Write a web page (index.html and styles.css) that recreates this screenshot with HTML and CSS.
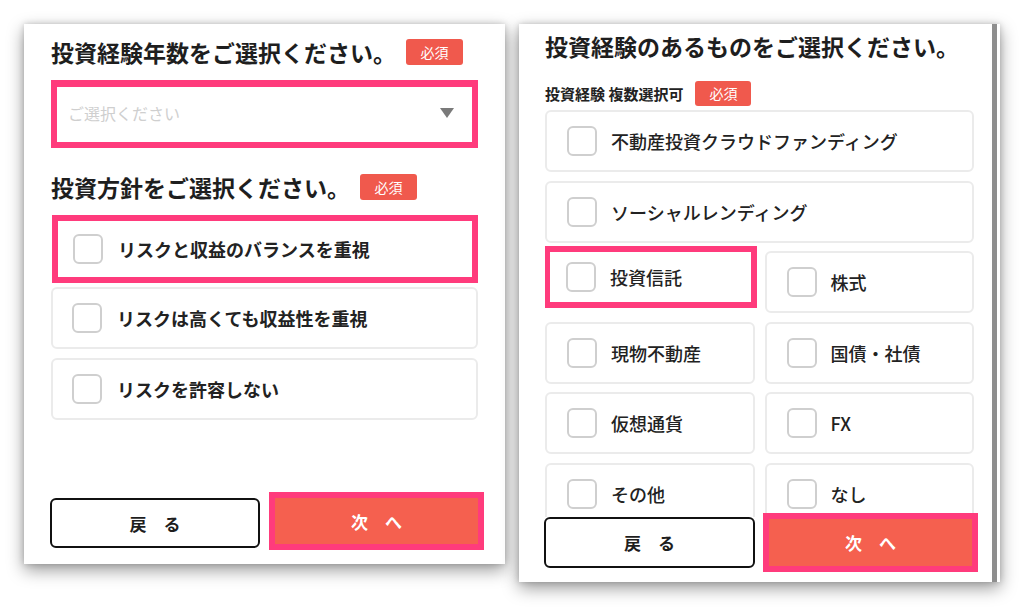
FILE: index.html
```html
<!DOCTYPE html>
<html lang="ja">
<head>
<meta charset="utf-8">
<title>投資経験</title>
<link rel="stylesheet" href="styles.css">
</head>
<body>
<div class="page">
  <section class="panel panel-left">
    <div class="q-row q-first">
      <h2 class="q-title">投資経験年数をご選択ください。</h2>
      <span class="badge badge-a">必須</span>
    </div>
    <div class="select hl">
      <span class="placeholder">ご選択ください</span>
      <span class="caret"></span>
    </div>
    <div class="q-row q-second">
      <h2 class="q-title">投資方針をご選択ください。</h2>
      <span class="badge badge-b">必須</span>
    </div>
    <div class="opt-list">
      <label class="opt opt-hl"><span class="cb"></span><span class="txt">リスクと収益のバランスを重視</span></label>
      <label class="opt opt-2"><span class="cb"></span><span class="txt">リスクは高くても収益性を重視</span></label>
      <label class="opt"><span class="cb"></span><span class="txt">リスクを許容しない</span></label>
    </div>
    <div class="footer footer-left">
      <button class="btn btn-back">戻　る</button>
      <button class="btn btn-next">次　へ</button>
    </div>
  </section>

  <section class="panel panel-right">
    <h2 class="q-title r-title">投資経験のあるものをご選択ください。</h2>
    <div class="sub-row">
      <span class="sub">投資経験 複数選択可</span>
      <span class="badge badge-c">必須</span>
    </div>
    <div class="scroll">
      <div class="grid">
        <label class="opt r-opt full"><span class="cb"></span><span class="txt">不動産投資クラウドファンディング</span></label>
        <label class="opt r-opt full"><span class="cb"></span><span class="txt">ソーシャルレンディング</span></label>
        <label class="opt r-opt grid-hl"><span class="cb"></span><span class="txt">投資信託</span></label>
        <label class="opt r-opt"><span class="cb"></span><span class="txt">株式</span></label>
        <label class="opt r-opt"><span class="cb"></span><span class="txt">現物不動産</span></label>
        <label class="opt r-opt"><span class="cb"></span><span class="txt">国債・社債</span></label>
        <label class="opt r-opt"><span class="cb"></span><span class="txt">仮想通貨</span></label>
        <label class="opt r-opt"><span class="cb"></span><span class="txt">FX</span></label>
        <label class="opt r-opt"><span class="cb"></span><span class="txt">その他</span></label>
        <label class="opt r-opt"><span class="cb"></span><span class="txt">なし</span></label>
      </div>
    </div>
    <div class="footer footer-right">
      <button class="btn btn-back r-back">戻　る</button>
      <button class="btn btn-next r-next">次　へ</button>
    </div>
  </section>
</div>
</body>
</html>
```

FILE: styles.css
```css
* { box-sizing: border-box; }
html, body { margin: 0; padding: 0; background: #ffffff; }
body {
  font-family: "Noto Sans CJK JP", "Noto Sans", sans-serif;
  color: #222;
  width: 1024px;
  height: 607px;
  overflow: hidden;
}
.page {
  display: flex;
  align-items: flex-start;
  gap: 14px;
  padding: 24px 0 0 24px;
}
.panel {
  position: relative;
  background: #fff;
  width: 481px;
  flex: none;
  display: flex;
  flex-direction: column;
  box-shadow: 0 6px 16px rgba(0,0,0,0.4), 0 0 6px rgba(0,0,0,0.18);
}
.panel-left {
  height: 540px;
  padding: 14px 27px 14px 27px;
}
.panel-right {
  height: 558px;
  padding: 8px 26px 14px 26px;
}
.panel-right::after {
  content: "";
  position: absolute;
  top: 0;
  bottom: 0;
  right: 3px;
  width: 5px;
  background: #8e8e8e;
}
.q-row {
  display: flex;
  align-items: center;
  height: 28px;
}
.q-title {
  margin: 0;
  font-size: 23px;
  line-height: 28px;
  font-weight: 700;
  color: #1e1e1e;
  letter-spacing: 0;
  white-space: nowrap;
}
.badge {
  display: inline-flex;
  align-items: center;
  justify-content: center;
  background: #f0594d;
  color: #fff;
  font-size: 14px;
  font-weight: 400;
  border-radius: 3px;
  height: 26px;
  width: 57px;
  flex: none;
}
.badge-a { margin-left: 10px; }
.badge-b { margin-left: 10px; }
.select {
  margin-top: 14px;
  height: 68px;
  border: 6px solid #ff3b7c;
  border-top-width: 7px;
  display: flex;
  align-items: center;
  justify-content: space-between;
  padding: 0 18px 4px 11px;
}
.placeholder {
  color: #cfcfcf;
  font-size: 16px;
}
.caret {
  width: 0; height: 0;
  border-left: 7px solid transparent;
  border-right: 7px solid transparent;
  border-top: 10px solid #7a7a7a;
}
.q-second { margin-top: 25px; }
.opt-list {
  margin-top: 14px;
  display: flex;
  flex-direction: column;
  gap: 9px;
}
.opt {
  display: flex;
  align-items: center;
  height: 62px;
  border: 2px solid #ebebeb;
  border-radius: 6px;
  padding-left: 19px;
  background: #fff;
}
.opt-hl {
  height: 68px;
  border: 6px solid #ff3b7c;
  border-radius: 0;
  padding-left: 15px;
  margin-left: 1px;
  margin-bottom: -5px;
}
.cb {
  width: 30px;
  height: 30px;
  border: 2px solid #cfcfcf;
  border-radius: 6px;
  flex: none;
  background: #fff;
}
.txt {
  margin-left: 15px;
  font-size: 18px;
  font-weight: 700;
  color: #222;
  white-space: nowrap;
}
.footer {
  display: flex;
  align-items: flex-start;
  margin-top: auto;
}
.btn {
  font-family: inherit;
  display: flex;
  align-items: center;
  justify-content: center;
  font-size: 17px;
  font-weight: 700;
  padding: 0;
  flex: none;
  cursor: pointer;
}
.btn-back {
  background: #fff;
  color: #1e1e1e;
  border: 2px solid #111;
  border-radius: 6px;
}
.btn-next {
  background: #f5604f;
  color: #fff;
  border: 6px solid #ff3b7c;
  border-radius: 0;
}
.footer-left { margin-left: -1px; gap: 9px; }
.footer-left .btn-back { width: 210px; height: 50px; margin-top: 6px; }
.footer-left .btn-next { width: 215px; height: 58px; }

.r-title { line-height: 28px; }
.sub-row {
  display: flex;
  align-items: center;
  margin-top: 20px;
  height: 26px;
}
.sub {
  font-size: 15px;
  font-weight: 700;
  color: #222;
  white-space: nowrap;
}
.badge-c { margin-left: 12px; width: 56px; height: 25px; }
.scroll {
  margin-top: 4px;
  flex: 1;
  min-height: 0;
  overflow: hidden;
}
.grid {
  display: grid;
  grid-template-columns: 1fr 1fr;
  grid-auto-rows: 62px;
  gap: 8.5px 10px;
}
.full { grid-column: 1 / -1; }
.r-opt { padding-left: 20px; }
.r-opt .txt { margin-left: 14px; font-weight: 500; }
.grid-hl {
  border: 6px solid #ff3b7c;
  border-radius: 0;
  margin: -5px -2px -1px -1px;
  padding-left: 16px;
}
.footer-right {
  margin-left: -1px;
  gap: 8px;
  align-items: center;
  height: 51px;
  background: #fff;
  flex: none;
}
.r-back { width: 211px; height: 51px; }
.r-next { width: 215px; height: 59px; margin: -4px 0; }
```
